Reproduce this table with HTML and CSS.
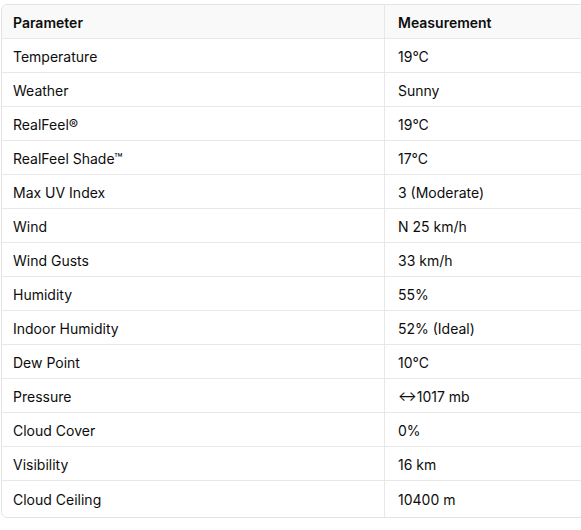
FILE: index.html
```html
<!DOCTYPE html>
<html>
<head>
<meta charset="utf-8">
<link rel="stylesheet" href="styles.css">
</head>
<body>
<div class="wrap">
<table class="data">
<thead>
<tr><th>Parameter</th><th>Measurement</th></tr>
</thead>
<tbody>
<tr><td>Temperature</td><td>19°C</td></tr>
<tr><td>Weather</td><td>Sunny</td></tr>
<tr><td>RealFeel®</td><td>19°C</td></tr>
<tr><td>RealFeel Shade™</td><td>17°C</td></tr>
<tr><td>Max UV Index</td><td>3 (Moderate)</td></tr>
<tr><td>Wind</td><td>N 25 km/h</td></tr>
<tr><td>Wind Gusts</td><td>33 km/h</td></tr>
<tr><td>Humidity</td><td>55%</td></tr>
<tr><td>Indoor Humidity</td><td>52% (Ideal)</td></tr>
<tr><td>Dew Point</td><td>10°C</td></tr>
<tr><td>Pressure</td><td>↔1017 mb</td></tr>
<tr><td>Cloud Cover</td><td>0%</td></tr>
<tr><td>Visibility</td><td>16 km</td></tr>
<tr><td>Cloud Ceiling</td><td>10400 m</td></tr>
</tbody>
</table>
</div>
</body>
</html>
```
FILE: styles.css
```css
html, body {
  margin: 0;
  padding: 0;
  background: #ffffff;
  overflow: hidden;
}
.wrap {
  padding: 4px 0 0 1px;
  width: 600px;
}
.data {
  width: 584px;
  border-collapse: separate;
  border-spacing: 0;
  border: 1px solid #e3e3e3;
  border-radius: 6px;
  font-family: Inter, "Noto Sans", sans-serif;
  font-size: 14px;
  color: #0d0d0d;
  table-layout: fixed;
}
.data th, .data td {
  text-align: left;
  height: 34px;
  padding: 1px 12px 0 11px;
  box-sizing: border-box;
  border-bottom: 1px solid #e8e8e8;
  vertical-align: middle;
}
.data th {
  font-weight: 600;
  background: #f9f9f9;
}
.data th:first-child { border-top-left-radius: 6px; }
.data th:first-child, .data td:first-child {
  width: 383px;
  border-right: 1px solid #e8e8e8;
}
.data td:last-child, .data th:last-child { padding-left: 13px; }
.data tbody tr:last-child td {
  border-bottom: none;
  height: 36px;
}
```
